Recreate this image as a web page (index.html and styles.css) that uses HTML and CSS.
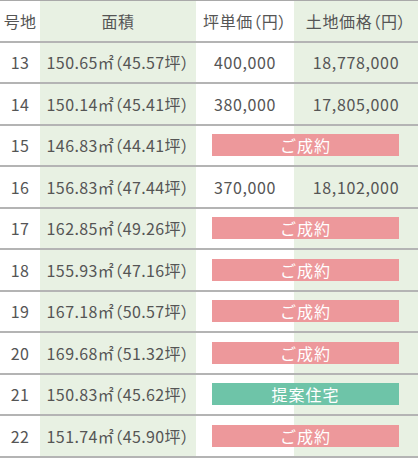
FILE: index.html
```html
<!DOCTYPE html>
<html lang="ja">
<head>
<meta charset="utf-8">
<link rel="stylesheet" href="styles.css">
</head>
<body>
<div class="table">
  <div class="row head">
    <div class="c c1">号地</div>
    <div class="c c2">面積</div>
    <div class="c c3">坪単価（円）</div>
    <div class="c c4">土地価格（円）</div>
  </div>
  <div class="row">
    <div class="c c1">13</div>
    <div class="c c2">150.65㎡（45.57坪）</div>
    <div class="c c3">400,000</div>
    <div class="c c4">18,778,000</div>
  </div>
  <div class="row">
    <div class="c c1">14</div>
    <div class="c c2">150.14㎡（45.41坪）</div>
    <div class="c c3">380,000</div>
    <div class="c c4">17,805,000</div>
  </div>
  <div class="row">
    <div class="c c1">15</div>
    <div class="c c2">146.83㎡（44.41坪）</div>
    <div class="c span"><span class="badge sold">ご成約</span></div>
  </div>
  <div class="row">
    <div class="c c1">16</div>
    <div class="c c2">156.83㎡（47.44坪）</div>
    <div class="c c3">370,000</div>
    <div class="c c4">18,102,000</div>
  </div>
  <div class="row">
    <div class="c c1">17</div>
    <div class="c c2">162.85㎡（49.26坪）</div>
    <div class="c span"><span class="badge sold">ご成約</span></div>
  </div>
  <div class="row">
    <div class="c c1">18</div>
    <div class="c c2">155.93㎡（47.16坪）</div>
    <div class="c span"><span class="badge sold">ご成約</span></div>
  </div>
  <div class="row">
    <div class="c c1">19</div>
    <div class="c c2">167.18㎡（50.57坪）</div>
    <div class="c span"><span class="badge sold">ご成約</span></div>
  </div>
  <div class="row">
    <div class="c c1">20</div>
    <div class="c c2">169.68㎡（51.32坪）</div>
    <div class="c span"><span class="badge sold">ご成約</span></div>
  </div>
  <div class="row">
    <div class="c c1">21</div>
    <div class="c c2">150.83㎡（45.62坪）</div>
    <div class="c span"><span class="badge plan">提案住宅</span></div>
  </div>
  <div class="row">
    <div class="c c1">22</div>
    <div class="c c2">151.74㎡（45.90坪）</div>
    <div class="c span"><span class="badge sold">ご成約</span></div>
  </div>
</div>
</body>
</html>
```
FILE: styles.css
```css
html, body {
  margin: 0;
  padding: 0;
  background: #fff;
}
body {
  font-family: "Noto Sans CJK JP", "Noto Sans", sans-serif;
  font-size: 16px;
  letter-spacing: 0.04em;
  color: #555;
}
.table {
  width: 418px;
  border-top: 1px solid #a9a9a9;
}
.row {
  display: grid;
  grid-template-columns: 40px 156px 98px 124px;
  height: 39.5px;
  border-bottom: 2px solid #b4b4b4;
}
.c {
  display: flex;
  align-items: center;
  justify-content: center;
  white-space: nowrap;
}
.c1 {
  letter-spacing: 0.02em;
}
.c2, .c3, .c4 {
  font-feature-settings: "palt";
}
.c2 {
  letter-spacing: 0.025em;
}
.c2, .c4 {
  background: #e8f1e3;
}
.span {
  grid-column: 3 / span 2;
  background: linear-gradient(to right, #fff 98px, #e8f1e3 98px);
  justify-content: flex-start;
}
.badge {
  display: flex;
  align-items: center;
  justify-content: center;
  width: 187px;
  height: 22px;
  margin-left: 16px;
  color: #fff;
  line-height: 1;
  letter-spacing: 0.06em;
}
.sold {
  background: #ed989b;
}
.plan {
  background: #6ec4a8;
}
```
